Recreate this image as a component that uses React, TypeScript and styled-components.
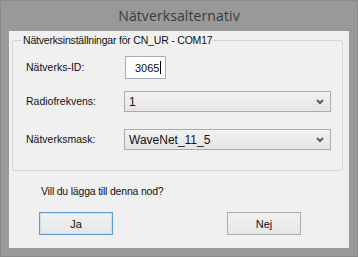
import styled, { createGlobalStyle } from 'styled-components';

const GlobalStyle = createGlobalStyle`
  html, body {
    margin: 0;
    padding: 0;
    background: #8f8f8f;
  }
`;

const Window = styled.div`
  box-sizing: border-box;
  display: flex;
  flex-direction: column;
  width: 358px;
  height: 257px;
  padding: 0 8px 8px 8px;
  background: #999999;
  border: 1px solid #8a8a8a;
`;

const TitleBar = styled.header`
  display: flex;
  align-items: center;
  justify-content: center;
  height: 29px;
  flex: none;
  color: #3b3b3b;
  font-family: 'Open Sans', 'Noto Sans', sans-serif;
  font-size: 14px;
  letter-spacing: 0.1px;
  padding-bottom: 1px;
`;

const Client = styled.main`
  flex: 1;
  display: flex;
  flex-direction: column;
  background: #f0f0f0;
  font-family: 'Liberation Sans', Arial, sans-serif;
  font-size: 10.5px;
  color: #111111;
`;

const Group = styled.fieldset`
  box-sizing: border-box;
  width: 331px;
  height: 137px;
  margin: 3px 0 0 3px;
  padding: 0 11px 0 13px;
  border: 1px solid #d5d5d5;
  border-radius: 2px;
  display: flex;
  flex-direction: column;
`;

const Legend = styled.legend`
  margin-left: -4px;
  padding: 0 1px;
  line-height: 13px;
  letter-spacing: -0.2px;
`;

const Row = styled.div<{ $top: number }>`
  display: grid;
  grid-template-columns: 98px 1fr;
  align-items: center;
  margin-top: ${p => p.$top}px;
`;

const Label = styled.span`
  line-height: 13px;
`;

const TextBox = styled.div`
  box-sizing: border-box;
  display: flex;
  align-items: center;
  width: 41px;
  height: 23px;
  margin-left: 1px;
  padding-left: 9px;
  font-size: 11px;
  background: #ffffff;
  border: 1px solid #abadb3;
`;

const Caret = styled.span`
  display: inline-block;
  width: 1px;
  height: 13px;
  margin-left: 1px;
  background: #000000;
`;

const Select = styled.div`
  box-sizing: border-box;
  display: flex;
  align-items: center;
  justify-content: space-between;
  height: 21px;
  padding: 0 6px 0 4px;
  font-size: 12px;
  background: linear-gradient(#f2f2f2, #e5e5e5);
  border: 1px solid #acacac;
`;

const Question = styled.p`
  margin: 14px 0 0 32px;
  line-height: 13px;
  letter-spacing: -0.2px;
`;

const Buttons = styled.div`
  display: flex;
  margin: 14px 0 0 30px;
  gap: 114px;
`;

const Button = styled.button<{ $default?: boolean }>`
  box-sizing: border-box;
  width: 74px;
  height: 23px;
  padding: 0;
  font-family: 'Liberation Sans', Arial, sans-serif;
  font-size: 11px;
  color: #111111;
  background: linear-gradient(#f2f2f2, #e6e6e6);
  border: 1px solid ${p => (p.$default ? '#5d9ad6' : '#acacac')};
  box-shadow: ${p => (p.$default ? 'inset 0 0 0 1px #c8dff4' : 'none')};
  border-radius: 0;
`;

const Chevron = () => (
  <svg width="8" height="6" viewBox="0 0 8 6">
    <path d="M1 1 L4 4 L7 1" fill="none" stroke="#5a5a5a" strokeWidth="2" />
  </svg>
);

export default function App() {
  return (
    <>
      <GlobalStyle />
      <Window>
        <TitleBar>Nätverksalternativ</TitleBar>
        <Client>
          <Group>
            <Legend>Nätverksinställningar för CN_UR - COM17</Legend>
            <Row $top={9}>
              <Label>Nätverks-ID:</Label>
              <TextBox>
                3065
                <Caret />
              </TextBox>
            </Row>
            <Row $top={12}>
              <Label>Radiofrekvens:</Label>
              <Select>
                <span>1</span>
                <Chevron />
              </Select>
            </Row>
            <Row $top={17}>
              <Label>Nätverksmask:</Label>
              <Select>
                <span>WaveNet_11_5</span>
                <Chevron />
              </Select>
            </Row>
          </Group>
          <Question>Vill du lägga till denna nod?</Question>
          <Buttons>
            <Button $default>Ja</Button>
            <Button>Nej</Button>
          </Buttons>
        </Client>
      </Window>
    </>
  );
}
